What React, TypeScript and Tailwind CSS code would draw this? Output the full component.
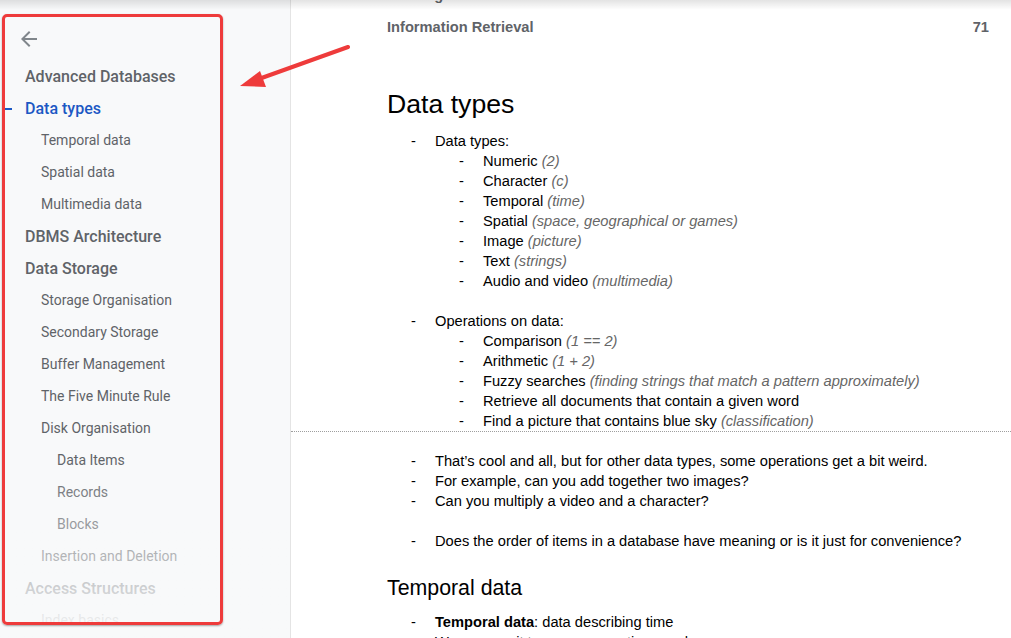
import React from "react";

type NavItem = { label: string; level: 1 | 2 | 3; active?: boolean };

const nav: NavItem[] = [
  { label: "Advanced Databases", level: 1 },
  { label: "Data types", level: 1, active: true },
  { label: "Temporal data", level: 2 },
  { label: "Spatial data", level: 2 },
  { label: "Multimedia data", level: 2 },
  { label: "DBMS Architecture", level: 1 },
  { label: "Data Storage", level: 1 },
  { label: "Storage Organisation", level: 2 },
  { label: "Secondary Storage", level: 2 },
  { label: "Buffer Management", level: 2 },
  { label: "The Five Minute Rule", level: 2 },
  { label: "Disk Organisation", level: 2 },
  { label: "Data Items", level: 3 },
  { label: "Records", level: 3 },
  { label: "Blocks", level: 3 },
  { label: "Insertion and Deletion", level: 2 },
  { label: "Access Structures", level: 1 },
  { label: "Index basics", level: 2 },
];

function NavRow({ item }: { item: NavItem }) {
  const pad =
    item.level === 1 ? "pl-[25px]" : item.level === 2 ? "pl-[41px]" : "pl-[57px]";
  const text =
    item.level === 1
      ? "text-[16px] font-medium"
      : "text-[14px] font-normal pb-[1px]";
  const color = item.active ? "text-[#1c58c4]" : "text-[#5f6368]";
  return (
    <div className={`relative h-[32px] flex items-center whitespace-nowrap ${pad} ${text} ${color}`}>
      {item.active && (
        <span className="absolute left-[5px] top-[15px] w-[7px] h-[2px] bg-[#1c58c4]" />
      )}
      {item.label}
    </div>
  );
}

function L1({ children }: { children: React.ReactNode }) {
  return (
    <div className="flex h-[20px] items-center pl-[24px]">
      <span className="w-[24px]">-</span>
      <span>{children}</span>
    </div>
  );
}

function L2({ children }: { children: React.ReactNode }) {
  return (
    <div className="flex h-[20px] items-center pl-[72px]">
      <span className="w-[24px]">-</span>
      <span>{children}</span>
    </div>
  );
}

function Note({ children }: { children: React.ReactNode }) {
  return <i className="text-[#666666]">{children}</i>;
}

export default function App() {
  return (
    <div className="relative w-[1011px] h-[638px] overflow-hidden flex bg-white">
      {/* Sidebar */}
      <aside
        className="relative w-[291px] h-full shrink-0 bg-[#f8f9fa] border-r border-[#e4e4e4] pt-[27px]"
        style={{ fontFamily: "Roboto, 'Noto Sans', sans-serif" }}
      >
        <div className="h-[24px] pl-[17px]">
          <svg width="24" height="24" viewBox="0 0 24 24" fill="#80868b">
            <path d="M20 11H7.83l5.59-5.59L12 4l-8 8 8 8 1.41-1.41L7.83 13H20v-2z" />
          </svg>
        </div>
        <nav className="mt-[10px]">
          {nav.map((n) => (
            <NavRow key={n.label} item={n} />
          ))}
        </nav>
        {/* fade */}
        <div className="absolute left-0 right-0 top-[458px] h-[180px] bg-gradient-to-b from-[#f8f9fa00] to-[#f8f9fa]" />
      </aside>

      {/* Main */}
      <main
        className="flex-1 h-full text-[14.67px] text-black"
        style={{ fontFamily: "'Liberation Sans', Arial, sans-serif" }}
      >
        <div className="pl-[96px] pr-[22px] mt-[-21px]">
          <div className="h-[32px] flex items-center justify-between font-bold text-[#5f6368]">
            <span>Ontologies and Databases</span>
            <span>71</span>
          </div>
          <div className="h-[32px] flex items-center justify-between font-bold text-[#5f6368]">
            <span>Information Retrieval</span>
            <span>71</span>
          </div>
          <h1 className="mt-[43px] h-[36px] flex items-center text-[26.67px] leading-none">
            Data types
          </h1>
          <div className="mt-[9px]">
            <L1>Data types:</L1>
            <L2>
              Numeric <Note>(2)</Note>
            </L2>
            <L2>
              Character <Note>(c)</Note>
            </L2>
            <L2>
              Temporal <Note>(time)</Note>
            </L2>
            <L2>
              Spatial <Note>(space, geographical or games)</Note>
            </L2>
            <L2>
              Image <Note>(picture)</Note>
            </L2>
            <L2>
              Text <Note>(strings)</Note>
            </L2>
            <L2>
              Audio and video <Note>(multimedia)</Note>
            </L2>
            <div className="h-[20px]" />
            <L1>Operations on data:</L1>
            <L2>
              Comparison <Note>(1 == 2)</Note>
            </L2>
            <L2>
              Arithmetic <Note>(1 + 2)</Note>
            </L2>
            <L2>
              Fuzzy searches <Note>(finding strings that match a pattern approximately)</Note>
            </L2>
            <L2>Retrieve all documents that contain a given word</L2>
            <L2>
              Find a picture that contains blue sky <Note>(classification)</Note>
            </L2>
          </div>
        </div>

        <div className="h-0 border-t border-dotted border-[#9e9e9e]" />

        <div className="pl-[96px] pr-[22px] pt-[19px]">
          <L1>That’s cool and all, but for other data types, some operations get a bit weird.</L1>
          <L1>For example, can you add together two images?</L1>
          <L1>Can you multiply a video and a character?</L1>
          <div className="h-[20px]" />
          <L1>Does the order of items in a database have meaning or is it just for convenience?</L1>
          <h2 className="mt-[24px] h-[28px] flex items-center text-[21.33px] leading-none">
            Temporal data
          </h2>
          <div className="mt-[9px]">
            <L1>
              <b>Temporal data</b>: data describing time
            </L1>
            <L1>We can use it to answer questions such as</L1>
          </div>
        </div>
      </main>

      {/* top shadow */}
      <div className="pointer-events-none absolute left-0 right-0 top-0 h-[10px] bg-gradient-to-b from-[#0000001c] to-[#00000000]" />

      {/* red annotation box */}
      <div className="pointer-events-none absolute left-[2px] top-[14px] w-[221px] h-[611px] rounded-[5px] border-[3px] border-[#ee3b3b] shadow-[0_1px_2px_rgba(0,0,0,0.35)]" />

      {/* red arrow */}
      <svg
        className="pointer-events-none absolute left-0 top-0"
        width="1011"
        height="638"
        viewBox="0 0 1011 638"
      >
        <line x1="348" y1="47" x2="256" y2="80" stroke="#ee3b3b" strokeWidth="4" strokeLinecap="round" />
        <polygon points="240,86 260,71 266,87" fill="#ee3b3b" />
      </svg>
    </div>
  );
}
